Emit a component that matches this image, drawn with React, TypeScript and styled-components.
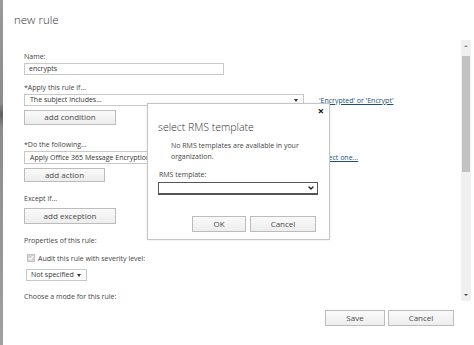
import styled, { createGlobalStyle } from 'styled-components';
import { ChevronDown } from 'lucide-react';

const GlobalStyle = createGlobalStyle`
  html, body {
    margin: 0;
    padding: 0;
    background: #fff;
  }
  body {
    font-family: 'Open Sans', 'Noto Sans', sans-serif;
    color: #444;
  }
`;

export default function App() {
  return (
    <>
      <GlobalStyle />
      <Window>
        <LeftEdge />
        <Main>
          <Title>new rule</Title>
          <Body>
            <Form>
              <Label $top={0}>Name:</Label>
              <TextBox $width={200}>encrypts</TextBox>

              <Label $top={8}>*Apply this rule if...</Label>
              <SelectRow>
                <DropBox $width={280} $height={12}>
                  The subject includes...
                  <Caret />
                </DropBox>
                <Link>'Encrypted' or 'Encrypt'</Link>
              </SelectRow>
              <Button $width={92} $height={15} $top={4}>add condition</Button>

              <Label $top={15}>*Do the following...</Label>
              <SelectRow>
                <DropBox $width={280} $height={13}>
                  Apply Office 365 Message Encryption
                </DropBox>
                <Link>Select one...</Link>
              </SelectRow>
              <Button $width={81} $height={15} $top={4}>add action</Button>

              <Label $top={12}>Except if...</Label>
              <Button $width={92} $height={16} $top={4}>add exception</Button>

              <Label $top={12}>Properties of this rule:</Label>
              <CheckRow>
                <CheckBox>
                  <svg width="6" height="6" viewBox="0 0 6 6">
                    <path d="M0.8 3.1 L2.4 4.6 L5.2 1.2" fill="none" stroke="#fff" strokeWidth="1.2" />
                  </svg>
                </CheckBox>
                Audit this rule with severity level:
              </CheckRow>
              <SmallSelect>
                Not specified
                <Caret />
              </SmallSelect>

              <Label $top={11}>Choose a mode for this rule:</Label>
            </Form>
            <Scrollbar>
              <ScrollArrow $up />
              <ScrollTrack>
                <ScrollThumb />
              </ScrollTrack>
              <ScrollArrow />
            </Scrollbar>
          </Body>
          <Footer>
            <Button $width={60} $height={16} $top={0}>Save</Button>
            <Button $width={66} $height={16} $top={0}>Cancel</Button>
          </Footer>
        </Main>

        <Dialog>
          <Close>×</Close>
          <DialogTitle>select RMS template</DialogTitle>
          <DialogText>
            No RMS templates are available in your
            <br />
            organization.
          </DialogText>
          <DialogLabel>RMS template:</DialogLabel>
          <DialogSelect>
            <ChevronDown size={8} strokeWidth={4} color="#222" />
          </DialogSelect>
          <DialogButtons>
            <Button $width={54} $height={16} $top={0}>OK</Button>
            <Button $width={66} $height={16} $top={0}>Cancel</Button>
          </DialogButtons>
        </Dialog>
      </Window>
    </>
  );
}

const Window = styled.div`
  position: relative;
  width: 474px;
  height: 345px;
  display: flex;
  overflow: hidden;
  background: #fff;
`;

const LeftEdge = styled.div`
  width: 3px;
  flex-shrink: 0;
  background: linear-gradient(
    to bottom,
    #9a9a9a 0%,
    #8c8c8c 30%,
    #5e5e5e 33%,
    #8c8c8c 37%,
    #a0a0a0 100%
  );
`;

const Main = styled.div`
  flex: 1;
  display: flex;
  flex-direction: column;
`;

const Title = styled.div`
  height: 40px;
  box-sizing: border-box;
  padding: 13px 0 0 11px;
  font-size: 11.5px;
  font-weight: 300;
  color: #333;
  line-height: 14px;
`;

const Body = styled.div`
  display: flex;
  height: 262px;
`;

const Form = styled.div`
  flex: 1;
  display: flex;
  flex-direction: column;
  align-items: flex-start;
  padding: 12px 0 0 21px;
  font-size: 7px;
`;

const Label = styled.div<{ $top: number }>`
  margin-top: ${(p) => p.$top}px;
  height: 10px;
  line-height: 10px;
  color: #444;
`;

const TextBox = styled.div<{ $width: number }>`
  margin-top: 1px;
  width: ${(p) => p.$width}px;
  height: 12px;
  box-sizing: border-box;
  border: 1px solid #c8c8c8;
  padding-left: 4px;
  line-height: 10px;
  color: #333;
  background: #fff;
`;

const SelectRow = styled.div`
  margin-top: 1px;
  display: flex;
  align-items: center;
  gap: 15px;
`;

const DropBox = styled.div<{ $width: number; $height: number }>`
  position: relative;
  width: ${(p) => p.$width}px;
  height: ${(p) => p.$height}px;
  box-sizing: border-box;
  border: 1px solid #c8c8c8;
  padding-left: 5px;
  line-height: ${(p) => p.$height - 2}px;
  color: #333;
  background: #fff;
  white-space: nowrap;
`;

const Caret = styled.span`
  position: absolute;
  right: 5px;
  top: 50%;
  margin-top: -1px;
  border-left: 2px solid transparent;
  border-right: 2px solid transparent;
  border-top: 3px solid #333;
`;

const Link = styled.a`
  color: #1d4f7c;
  text-decoration: underline;
  font-size: 7px;
  cursor: pointer;
`;

const Button = styled.button<{ $width: number; $height: number; $top: number }>`
  margin-top: ${(p) => p.$top}px;
  width: ${(p) => p.$width}px;
  height: ${(p) => p.$height}px;
  box-sizing: border-box;
  padding: 0;
  border: 1px solid #bcbcbc;
  background: linear-gradient(to bottom, #fafafa, #ededed);
  font-family: 'Open Sans', 'Noto Sans', sans-serif;
  font-size: 8px;
  font-weight: 400;
  color: #4a4a4a;
  line-height: 1;
`;

const CheckRow = styled.div`
  margin-top: 7px;
  display: flex;
  align-items: center;
  gap: 3px;
  height: 10px;
  padding-left: 3px;
  color: #444;
`;

const CheckBox = styled.span`
  width: 8px;
  height: 8px;
  box-sizing: border-box;
  border: 1px solid #c4c4c4;
  background: #d4d4d4;
  display: flex;
  align-items: center;
  justify-content: center;
`;

const SmallSelect = styled.div`
  position: relative;
  margin-top: 6px;
  margin-left: 2px;
  width: 61px;
  height: 12px;
  box-sizing: border-box;
  border: 1px solid #c8c8c8;
  padding-left: 4px;
  line-height: 10px;
  font-size: 7px;
  color: #333;
`;

const Scrollbar = styled.div`
  width: 10px;
  margin-right: 3px;
  display: flex;
  flex-direction: column;
  background: #f0f0f0;
  height: 261px;
`;

const ScrollArrow = styled.div<{ $up?: boolean }>`
  height: 12px;
  display: flex;
  align-items: center;
  justify-content: center;
  &::before {
    content: '';
    border-left: 2px solid transparent;
    border-right: 2px solid transparent;
    ${(p) => (p.$up ? 'border-bottom: 2px solid #888;' : 'border-top: 2px solid #444;')}
  }
`;

const ScrollTrack = styled.div`
  flex: 1;
  padding-top: 4px;
`;

const ScrollThumb = styled.div`
  height: 116px;
  margin: 0 1px;
  background: #c2c2c2;
`;

const Footer = styled.div`
  display: flex;
  justify-content: flex-end;
  gap: 3px;
  padding: 8px 20px 0 0;
`;

const Dialog = styled.div`
  position: absolute;
  left: 147px;
  top: 103px;
  width: 183px;
  height: 137px;
  box-sizing: border-box;
  border: 1px solid #c6c6c6;
  background: #fff;
  box-shadow: 0 0 2px rgba(0, 0, 0, 0.12);
  padding: 16px 0 0 10px;
  display: flex;
  flex-direction: column;
  align-items: flex-start;
`;

const Close = styled.div`
  position: absolute;
  right: 5px;
  top: 1px;
  font-size: 11px;
  font-weight: 700;
  color: #111;
  line-height: 12px;
`;

const DialogTitle = styled.div`
  font-size: 10.5px;
  font-weight: 300;
  color: #333;
  line-height: 14px;
`;

const DialogText = styled.div`
  margin-top: 6px;
  padding-left: 13px;
  font-size: 7px;
  line-height: 11px;
  color: #444;
`;

const DialogLabel = styled.div`
  margin-top: 8px;
  font-size: 7px;
  line-height: 10px;
  padding-left: 1px;
  color: #444;
`;

const DialogSelect = styled.div`
  margin-top: 2px;
  width: 160px;
  height: 13px;
  box-sizing: border-box;
  border: 1px solid #555;
  border-bottom-width: 2px;
  display: flex;
  align-items: center;
  justify-content: flex-end;
  padding-right: 2px;
`;

const DialogButtons = styled.div`
  align-self: flex-end;
  margin: 21px 13px 0 0;
  display: flex;
  gap: 4px;
`;
